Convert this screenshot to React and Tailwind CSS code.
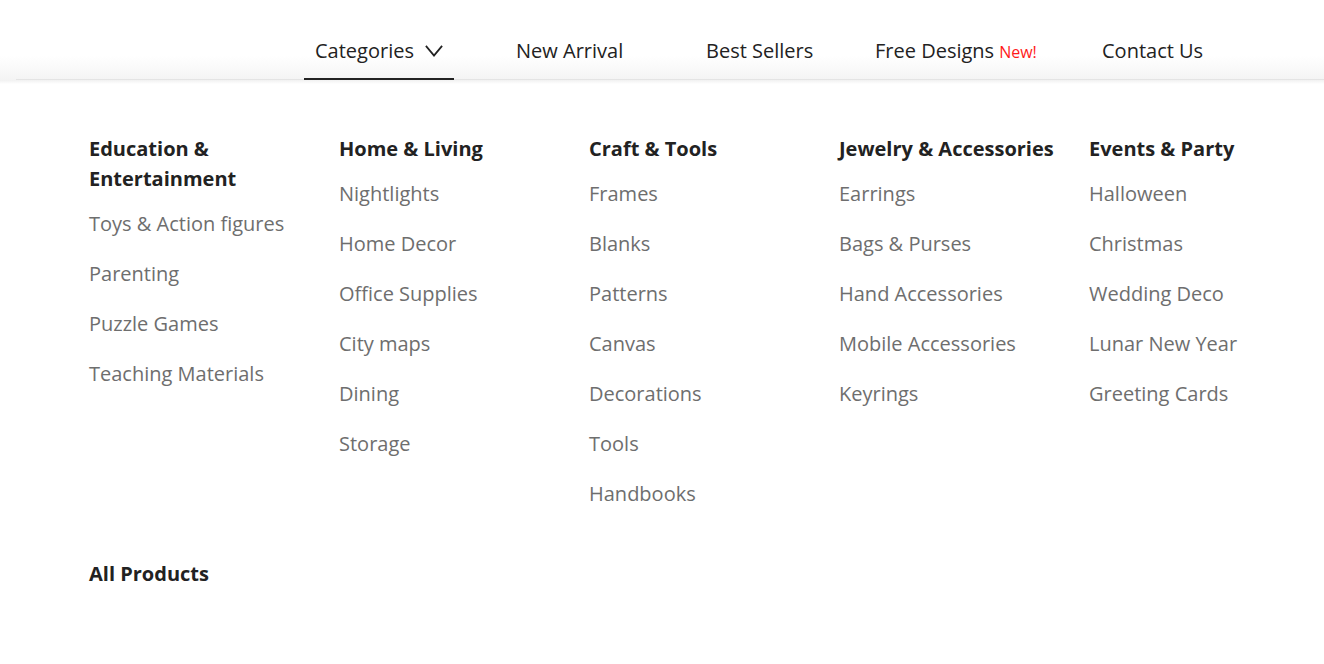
const columns = [
  {
    title: ["Education &", "Entertainment"],
    items: ["Toys & Action figures", "Parenting", "Puzzle Games", "Teaching Materials"],
  },
  {
    title: ["Home & Living"],
    items: ["Nightlights", "Home Decor", "Office Supplies", "City maps", "Dining", "Storage"],
  },
  {
    title: ["Craft & Tools"],
    items: ["Frames", "Blanks", "Patterns", "Canvas", "Decorations", "Tools", "Handbooks"],
  },
  {
    title: ["Jewelry & Accessories"],
    items: ["Earrings", "Bags & Purses", "Hand Accessories", "Mobile Accessories", "Keyrings"],
  },
  {
    title: ["Events & Party"],
    items: ["Halloween", "Christmas", "Wedding Deco", "Lunar New Year", "Greeting Cards"],
  },
];

function Chevron() {
  return (
    <svg width="18" height="14" viewBox="0 0 18 14" fill="none" className="ml-[11px]">
      <path d="M1.5 2.5 L9 11.5 L16.5 2.5" stroke="#222" strokeWidth="1.8" strokeLinecap="square" />
    </svg>
  );
}

export default function App() {
  return (
    <div
      className="min-h-[664px] w-[1324px] overflow-hidden bg-white text-[#222]"
      style={{ fontFamily: '"Open Sans", "Liberation Sans", sans-serif' }}
    >
      {/* --- TOP NAV --- */}
      <nav className="h-[80px] bg-gradient-to-b from-white from-[70%] to-[#f4f4f4]">
        <div className="flex h-[79px] items-start pl-[304px] pt-[36px] text-[20px] leading-[30px]">
          <div className="relative flex h-[43px] w-[150px] items-start pl-[11px]">
            <span>Categories</span>
            <span className="mt-[8px]">
              <Chevron />
            </span>
            <div className="absolute bottom-[-1px] left-0 h-[2px] w-[150px] bg-[#222]" />
          </div>
          <div className="ml-[62px] w-[190px]">New Arrival</div>
          <div className="w-[169px]">Best Sellers</div>
          <div className="flex w-[227px] items-baseline">
            <span>Free Designs</span>
            <span className="ml-[5px] text-[16px] text-[#ff1a1a]">New!</span>
          </div>
          <div>Contact Us</div>
        </div>
        <div className="ml-[16px] h-px bg-[#e4e4e4]" />
      </nav>
      <div className="h-[4px] bg-gradient-to-b from-[#f1f1f1] to-white" />

      {/* --- DROPDOWN PANEL --- */}
      <div className="pl-[89px] pt-[50px]">
        <div className="flex">
          {columns.map((col) => (
            <div key={col.title[0]} className="w-[250px] shrink-0">
              <div className="mb-[5px] text-[20px] font-bold leading-[30px] text-[#222]">
                {col.title.map((t) => (
                  <div key={t}>{t}</div>
                ))}
              </div>
              {col.items.map((item) => (
                <div key={item} className="py-[10px] text-[20px] leading-[30px] text-[#6e6e6e]">
                  {item}
                </div>
              ))}
            </div>
          ))}
        </div>
        <div className="mt-[40px] text-[20px] font-bold leading-[30px] text-[#222]">All Products</div>
      </div>
    </div>
  );
}
